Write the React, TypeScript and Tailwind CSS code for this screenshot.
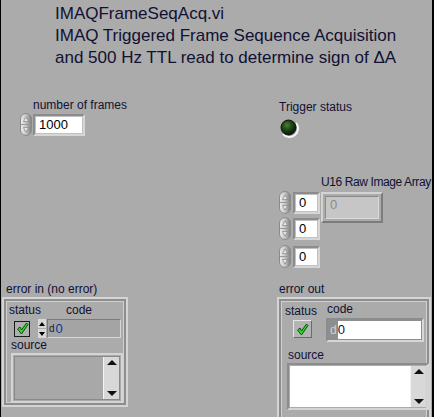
import React from 'react';

const font = { fontFamily: '"Liberation Sans", Arial, sans-serif' };

function Spinner() {
  return (
    <svg width="12" height="23" viewBox="0 0 12 23">
      <defs>
        <linearGradient id="spg" x1="0" y1="0" x2="1" y2="0">
          <stop offset="0" stopColor="#f0f0f0" />
          <stop offset="0.5" stopColor="#c4c4c4" />
          <stop offset="1" stopColor="#7c7c7c" />
        </linearGradient>
      </defs>
      <rect x="0.5" y="0.5" width="11" height="22" rx="5.5" fill="url(#spg)" stroke="#8a8a8a" />
      <line x1="1" y1="11.5" x2="11" y2="11.5" stroke="#9a9a9a" />
      <path d="M6 4 L8.5 8.5 L3.5 8.5 Z" fill="#e8e8e8" stroke="#777" strokeWidth="0.6" />
      <path d="M6 19 L8.5 14.5 L3.5 14.5 Z" fill="#e8e8e8" stroke="#777" strokeWidth="0.6" />
    </svg>
  );
}

function NumBox({ value, w }: { value: string; w: string }) {
  return (
    <div className={`${w} h-[22px] border-2 border-t-[#8c8c8c] border-l-[#8c8c8c] border-b-[#d6d6d6] border-r-[#d6d6d6] bg-[#c0c0c0] p-px`}>
      <div className="h-full bg-white text-[13px] leading-[16px] pl-[3px] text-black">{value}</div>
    </div>
  );
}

function Check({ raised }: { raised?: boolean }) {
  return (
    <div
      className={
        raised
          ? 'w-[19px] h-[18px] bg-[#b4b4b4] border border-t-[#e6e6e6] border-l-[#e6e6e6] border-b-[#6a6a6a] border-r-[#6a6a6a] flex items-center justify-center'
          : 'w-[16px] h-[16px] bg-[#b0b0b0] border border-[#1a1a1a] flex items-center justify-center'
      }
    >
      <svg width="13" height="13" viewBox="0 0 13 13">
        <path d="M1.5 7 L4 5 L5.5 8 L10.5 1 L12 2.5 L5.5 12 Z" fill="#22e022" stroke="#0a3a0a" strokeWidth="0.9" strokeLinejoin="round" />
      </svg>
    </div>
  );
}

function Scrollbar() {
  return (
    <div className="w-[16px] h-full bg-[#d8d8d8] border-l border-[#f4f4f4] flex flex-col justify-between items-center py-[3px]">
      <svg width="10" height="5" viewBox="0 0 10 5"><path d="M5 0 L10 5 L0 5 Z" fill="#111" /></svg>
      <svg width="10" height="5" viewBox="0 0 10 5"><path d="M0 0 L10 0 L5 5 Z" fill="#111" /></svg>
    </div>
  );
}

function Frame({ children, className }: { children: React.ReactNode; className: string }) {
  return (
    <div className={`${className} border-2 border-[#d4d4d4]`}>
      <div className="h-full border-2 border-[#8e8e8e]">
        <div className="h-full border border-[#cfcfcf]">{children}</div>
      </div>
    </div>
  );
}

export default function App() {
  return (
    <div className="w-[434px] h-[417px] bg-[#ababab] border-l border-r-2 border-black relative overflow-hidden text-[#111133]" style={font}>
      <div className="absolute left-[54px] top-[3px] text-[17px] leading-[22px]">
        <div>IMAQFrameSeqAcq.vi</div>
        <div>IMAQ Triggered Frame Sequence Acquisition</div>
        <div>and 500 Hz TTL read to determine sign of ΔA</div>
      </div>

      {/* number of frames */}
      <div className="absolute left-[19px] top-[98px] flex flex-col">
        <div className="pl-[13px] text-[12px] leading-[15px]">number of frames</div>
        <div className="flex items-center gap-[1px]">
          <Spinner />
          <NumBox value="1000" w="w-[52px]" />
        </div>
      </div>

      {/* trigger status */}
      <div className="absolute left-[278px] top-[100px] flex flex-col gap-[3px]">
        <div className="text-[12px] leading-[15px]">Trigger status</div>
        <svg width="20" height="20" viewBox="0 0 20 20">
          <defs>
            <radialGradient id="led" cx="0.4" cy="0.35" r="0.6">
              <stop offset="0" stopColor="#4e7e3c" />
              <stop offset="0.5" stopColor="#1f4a18" />
              <stop offset="1" stopColor="#0a1c08" />
            </radialGradient>
          </defs>
          <path d="M4 16 A8 8 0 0 0 17 5" stroke="#f4f4f4" strokeWidth="2" fill="none" />
          <circle cx="9.5" cy="9.5" r="7.5" fill="url(#led)" stroke="#0c140a" strokeWidth="1" />
        </svg>
      </div>

      {/* U16 raw image array */}
      <div className="absolute left-[278px] top-[175px] flex flex-col">
        <div className="pl-[42px] text-[12px] leading-[15px] tracking-[-0.4px] whitespace-nowrap">U16 Raw Image Array</div>
        <div className="flex gap-[1px] mt-[1px]">
          <div className="flex flex-col">
            <div className="flex items-center gap-[2px]">
              <Spinner />
              <NumBox value="0" w="w-[27px]" />
            </div>
            <div className="flex items-center gap-[2px] mt-[3px]">
              <Spinner />
              <NumBox value="0" w="w-[27px]" />
            </div>
            <div className="flex items-center gap-[2px] mt-[5px]">
              <Spinner />
              <NumBox value="0" w="w-[27px]" />
            </div>
          </div>
          <div className="w-[62px] h-[31px] mt-[1px] border-2 border-t-[#d4d4d4] border-l-[#d4d4d4] border-b-[#7c7c7c] border-r-[#7c7c7c] p-[2px]">
            <div className="h-full border border-t-[#8a8a8a] border-l-[#8a8a8a] border-b-[#d8d8d8] border-r-[#d8d8d8] bg-[#c6c6c6] text-[13px] leading-[16px] pl-[4px] text-[#8a8a8a]">0</div>
          </div>
        </div>
      </div>

      {/* error in */}
      <div className="absolute left-[1px] top-[282px] flex flex-col">
        <div className="pl-[4px] text-[12px] leading-[15px]">error in (no error)</div>
        <Frame className="w-[126px] h-[110px]">
          <div className="flex flex-col px-[2px] pt-[1px]">
            <div className="flex text-[12px] leading-[14px]">
              <span className="w-[57px]">status</span>
              <span>code</span>
            </div>
            <div className="flex items-center mt-[2px] h-[19px]">
              <div className="w-[30px] pl-[5px]"><Check /></div>
              <div className="flex flex-col gap-px mr-[1px]">
                <div className="w-[8px] h-[9px] bg-[#d8d8d8] flex items-center justify-center"><svg width="6" height="4" viewBox="0 0 6 4"><path d="M3 0 L6 4 L0 4 Z" fill="#000" /></svg></div>
                <div className="w-[8px] h-[9px] bg-[#d8d8d8] flex items-center justify-center"><svg width="6" height="4" viewBox="0 0 6 4"><path d="M0 0 L6 0 L3 4 Z" fill="#000" /></svg></div>
              </div>
              <div className="w-[77px] h-[19px] border border-t-[#7a7a7a] border-l-[#7a7a7a] border-b-[#d6d6d6] border-r-[#d6d6d6] bg-[#a4a4a4] flex items-center text-[13px]">
                <span className="text-[10px] text-[#222] pl-[1px]">d</span>
                <span className="text-[#1030a0] pl-[1px]">0</span>
              </div>
            </div>
            <div className="text-[12px] leading-[14px] pl-[2px]">source</div>
            <div className="mt-[1px] ml-[2px] w-[112px] h-[50px] border-2 border-[#d4d4d4] p-px">
              <div className="h-full border border-[#8a8a8a] flex justify-end bg-[#a8a8a8]">
                <Scrollbar />
              </div>
            </div>
          </div>
        </Frame>
      </div>

      {/* error out */}
      <div className="absolute left-[276px] top-[282px] flex flex-col">
        <div className="pl-[2px] text-[12px] leading-[15px]">error out</div>
        <Frame className="w-[154px] h-[126px]">
          <div className="flex flex-col px-[2px]">
            <div className="flex items-start">
              <div className="flex flex-col w-[48px] pt-[2px]">
                <span className="text-[12px] leading-[14px] pl-[1px]">status</span>
                <div className="mt-[2px] pl-[9px]"><Check raised /></div>
              </div>
              <div className="flex flex-col">
                <span className="text-[12px] leading-[14px] pl-[1px]">code</span>
                <div className="mt-[2px] w-[98px] h-[24px] border-2 border-t-[#8c8c8c] border-l-[#8c8c8c] border-b-[#d6d6d6] border-r-[#d6d6d6] p-px bg-[#8e8e8e] flex">
                  <span className="text-[12px] leading-[18px] text-[#d0d0d0] px-[1px]">d</span>
                  <div className="flex-1 bg-white text-[13px] leading-[18px] text-[#101050]">0</div>
                </div>
              </div>
            </div>
            <div className="text-[12px] leading-[14px] mt-[6px] pl-[4px]">source</div>
            <div className="mt-[1px] ml-[3px] w-[142px] h-[47px] border-2 border-t-[#8c8c8c] border-l-[#8c8c8c] border-b-[#d4d4d4] border-r-[#d4d4d4] p-px">
              <div className="h-full flex bg-white">
                <div className="flex-1" />
                <Scrollbar />
              </div>
            </div>
          </div>
        </Frame>
      </div>
    </div>
  );
}
